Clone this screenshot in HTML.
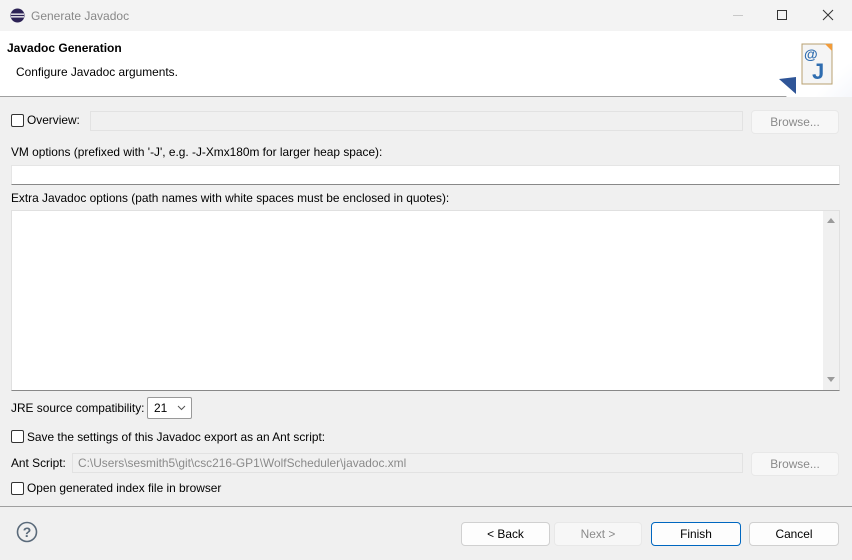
<!DOCTYPE html>
<html><head><style>
*{box-sizing:border-box;margin:0;padding:0}
body{width:852px;height:560px;background:#f0f0f0;font-family:"Liberation Sans",sans-serif;font-size:11.9px;color:#000;position:relative;overflow:hidden}
.a{position:absolute}
.cb{position:absolute;width:13px;height:13px;border:1px solid #333;border-radius:2px;background:#fff}
.btn{position:absolute;height:24px;border:1px solid #d0d0d0;border-radius:4px;background:#fdfdfd;text-align:center;line-height:22px}
.dis{color:#8a8a8a;background:#f7f7f7;border-color:#e8e8e8}
.fld{position:absolute;border:1px solid #e2e2e2;background:#f0f0f0}
</style></head><body>
<div class="a" style="left:0;top:0;width:852px;height:31px;background:#f3f3f3"></div>
<svg class="a" style="left:10px;top:8px" width="15" height="15" viewBox="0 0 15 15"><circle cx="7.5" cy="7.5" r="7" fill="#2c2255"/><rect x="1" y="5.5" width="13" height="1.3" fill="#fff"/><rect x="1" y="8.2" width="13" height="1.3" fill="#fff"/></svg>
<div class="a" style="left:31px;top:9px;color:#888;font-size:12px">Generate Javadoc</div>
<div class="a" style="left:733px;top:15px;width:10px;height:1px;background:#c8c8c8"></div>
<div class="a" style="left:777px;top:10px;width:10px;height:10px;border:1px solid #333"></div>
<svg class="a" style="left:822px;top:9px" width="12" height="12"><path d="M1 1L11 11M11 1L1 11" stroke="#333" stroke-width="1"/></svg>
<div class="a" style="left:0;top:31px;width:852px;height:66px;background:#fff;border-bottom:1px solid #a0a0a0"></div>
<svg class="a" style="left:770px;top:31px" width="82" height="66"><defs><radialGradient id="g" cx="1" cy="1" r="1"><stop offset="0" stop-color="#cdd6ee"/><stop offset="1" stop-color="#fff"/></radialGradient></defs><circle cx="90" cy="80" r="75" fill="url(#g)"/><path d="M9 48L26 46L26 63Z" fill="#2f5597"/><rect x="32" y="13" width="30" height="40" fill="#f5f5f5" stroke="#b8a070"/><path d="M55 13L62 20L62 13Z" fill="#f39c3a"/><text x="34" y="28" fill="#2f6db0" font-size="14" font-weight="bold" font-family="Liberation Sans">@</text><text x="42" y="48" fill="#2f6db0" font-size="22" font-weight="bold" font-family="Liberation Sans">J</text></svg>
<div class="a" style="left:7px;top:41px;font-weight:bold;font-size:12px">Javadoc Generation</div>
<div class="a" style="left:16px;top:65px">Configure Javadoc arguments.</div>
<div class="cb" style="left:11px;top:114px"></div>
<div class="a" style="left:27px;top:113px">Overview:</div>
<div class="fld" style="left:90px;top:111px;width:653px;height:20px"></div>
<div class="btn dis" style="left:751px;top:110px;width:88px">Browse...</div>
<div class="a" style="left:11px;top:145px">VM options (prefixed with '-J', e.g. -J-Xmx180m for larger heap space):</div>
<div class="a" style="left:11px;top:165px;width:829px;height:20px;background:#fff;border:1px solid #e5e5e5;border-bottom:1px solid #888"></div>
<div class="a" style="left:11px;top:191px">Extra Javadoc options (path names with white spaces must be enclosed in quotes):</div>
<div class="a" style="left:11px;top:210px;width:829px;height:181px;background:#fff;border:1px solid #e0e0e0;border-bottom:1px solid #888"></div>
<div class="a" style="left:823px;top:211px;width:16px;height:179px;background:#f0f0f0"></div>
<svg class="a" style="left:826px;top:216px" width="10" height="8"><path d="M1 7L5 2L9 7Z" fill="#9a9a9a"/></svg>
<svg class="a" style="left:826px;top:376px" width="10" height="8"><path d="M1 1L5 6L9 1Z" fill="#9a9a9a"/></svg>
<div class="a" style="left:11px;top:401px">JRE source compatibility:</div>
<div class="a" style="left:147px;top:397px;width:45px;height:22px;background:#fff;border:1px solid #999;border-radius:2px;padding:3px 0 0 6px">21</div>
<svg class="a" style="left:177px;top:405px" width="9" height="6"><path d="M1 1L4.5 4.5L8 1" stroke="#555" fill="none"/></svg>
<div class="cb" style="left:11px;top:430px"></div>
<div class="a" style="left:27px;top:430px">Save the settings of this Javadoc export as an Ant script:</div>
<div class="a" style="left:11px;top:456px">Ant Script:</div>
<div class="fld" style="left:72px;top:453px;width:671px;height:20px;color:#8a8a8a;padding:2px 0 0 5px">C:\Users\sesmith5\git\csc216-GP1\WolfScheduler\javadoc.xml</div>
<div class="btn dis" style="left:751px;top:452px;width:88px">Browse...</div>
<div class="cb" style="left:11px;top:482px"></div>
<div class="a" style="left:27px;top:481px">Open generated index file in browser</div>
<div class="a" style="left:0;top:506px;width:852px;height:1px;background:#a0a0a0"></div>
<svg class="a" style="left:16px;top:521px" width="22" height="22"><circle cx="11" cy="11" r="9.5" stroke="#5a6a7a" stroke-width="1.6" fill="none"/><text x="11" y="16" text-anchor="middle" font-size="14" font-weight="bold" fill="#5a6a7a" font-family="Liberation Sans">?</text></svg>
<div class="btn" style="left:461px;top:522px;width:89px;background:#fdfdfd">&lt; Back</div>
<div class="btn dis" style="left:554px;top:522px;width:88px">Next &gt;</div>
<div class="btn" style="left:651px;top:522px;width:90px;border-color:#0067c0">Finish</div>
<div class="btn" style="left:749px;top:522px;width:90px">Cancel</div>
</body></html>
